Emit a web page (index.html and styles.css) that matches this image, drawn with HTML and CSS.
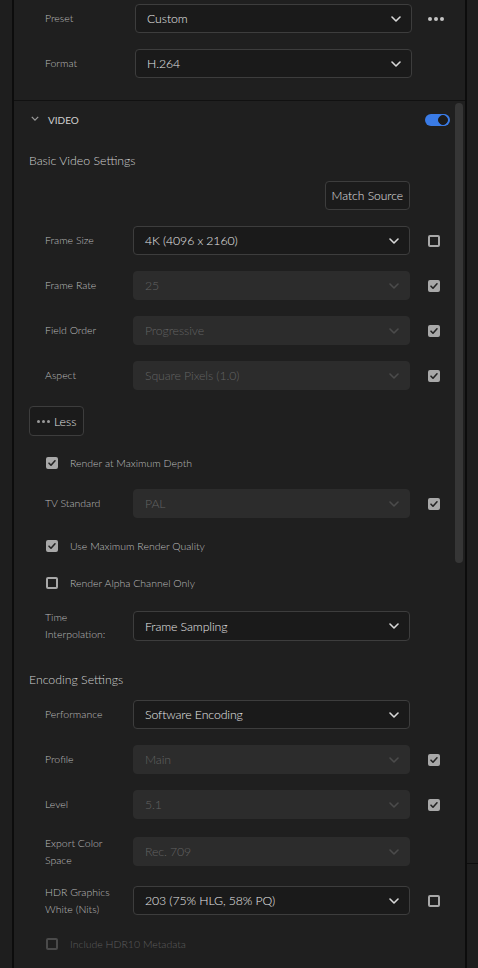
FILE: index.html
```html
<!DOCTYPE html>
<html lang="en">
<head>
    <meta charset="UTF-8">
    <meta name="viewport" content="width=device-width, initial-scale=1.0">
    <title>Export Settings</title>
    <link rel="stylesheet" href="styles.css">
</head>
<body>
    <div class="gutter"></div>
    <div class="panel">
        <div class="top">
            <div class="row first">
                <span class="label">Preset</span>
                <div class="select"><span>Custom</span><svg class="chev" viewBox="0 0 10 6"><path d="M1 1l4 4 4-4"/></svg></div>
                <div class="more"><i></i><i></i><i></i></div>
            </div>
            <div class="row">
                <span class="label">Format</span>
                <div class="select"><span>H.264</span><svg class="chev" viewBox="0 0 10 6"><path d="M1 1l4 4 4-4"/></svg></div>
            </div>
        </div>

        <div class="video">
            <div class="video-body">
                <div class="section-head">
                    <svg class="head-chev" viewBox="0 0 10 6"><path d="M1 1l4 4 4-4"/></svg>
                    <span>VIDEO</span>
                    <div class="toggle"><i></i></div>
                </div>

                <h3 class="group-title">Basic Video Settings</h3>

                <div class="row match">
                    <span class="label"></span>
                    <div class="field-right"><button class="btn">Match Source</button></div>
                </div>

                <div class="row">
                    <span class="label">Frame Size</span>
                    <div class="select"><span>4K (4096 x 2160)</span><svg class="chev" viewBox="0 0 10 6"><path d="M1 1l4 4 4-4"/></svg></div>
                    <span class="box"></span>
                </div>
                <div class="row">
                    <span class="label">Frame Rate</span>
                    <div class="select off"><span>25</span><svg class="chev" viewBox="0 0 10 6"><path d="M1 1l4 4 4-4"/></svg></div>
                    <span class="box on"><svg viewBox="0 0 12 12"><path d="M3 6.2l2 2 4-4.4"/></svg></span>
                </div>
                <div class="row">
                    <span class="label">Field Order</span>
                    <div class="select off"><span>Progressive</span><svg class="chev" viewBox="0 0 10 6"><path d="M1 1l4 4 4-4"/></svg></div>
                    <span class="box on"><svg viewBox="0 0 12 12"><path d="M3 6.2l2 2 4-4.4"/></svg></span>
                </div>
                <div class="row">
                    <span class="label">Aspect</span>
                    <div class="select off"><span>Square Pixels (1.0)</span><svg class="chev" viewBox="0 0 10 6"><path d="M1 1l4 4 4-4"/></svg></div>
                    <span class="box on"><svg viewBox="0 0 12 12"><path d="M3 6.2l2 2 4-4.4"/></svg></span>
                </div>

                <button class="btn less"><span class="dots"><i></i><i></i><i></i></span>Less</button>

                <div class="check-row mt21">
                    <span class="box on"><svg viewBox="0 0 12 12"><path d="M3 6.2l2 2 4-4.4"/></svg></span>
                    <span>Render at Maximum Depth</span>
                </div>
                <div class="row mt20">
                    <span class="label">TV Standard</span>
                    <div class="select off"><span>PAL</span><svg class="chev" viewBox="0 0 10 6"><path d="M1 1l4 4 4-4"/></svg></div>
                    <span class="box on"><svg viewBox="0 0 12 12"><path d="M3 6.2l2 2 4-4.4"/></svg></span>
                </div>
                <div class="check-row mt22">
                    <span class="box on"><svg viewBox="0 0 12 12"><path d="M3 6.2l2 2 4-4.4"/></svg></span>
                    <span>Use Maximum Render Quality</span>
                </div>
                <div class="check-row mt25">
                    <span class="box"></span>
                    <span>Render Alpha Channel Only</span>
                </div>
                <div class="row tall mt22">
                    <span class="label">Time<br>Interpolation:</span>
                    <div class="select"><span>Frame Sampling</span><svg class="chev" viewBox="0 0 10 6"><path d="M1 1l4 4 4-4"/></svg></div>
                </div>

                <h3 class="group-title enc">Encoding Settings</h3>

                <div class="row mt10">
                    <span class="label">Performance</span>
                    <div class="select"><span>Software Encoding</span><svg class="chev" viewBox="0 0 10 6"><path d="M1 1l4 4 4-4"/></svg></div>
                </div>
                <div class="row">
                    <span class="label">Profile</span>
                    <div class="select off"><span>Main</span><svg class="chev" viewBox="0 0 10 6"><path d="M1 1l4 4 4-4"/></svg></div>
                    <span class="box on"><svg viewBox="0 0 12 12"><path d="M3 6.2l2 2 4-4.4"/></svg></span>
                </div>
                <div class="row">
                    <span class="label">Level</span>
                    <div class="select off"><span>5.1</span><svg class="chev" viewBox="0 0 10 6"><path d="M1 1l4 4 4-4"/></svg></div>
                    <span class="box on"><svg viewBox="0 0 12 12"><path d="M3 6.2l2 2 4-4.4"/></svg></span>
                </div>
                <div class="row mt18">
                    <span class="label">Export Color<br>Space</span>
                    <div class="select off"><span>Rec. 709</span><svg class="chev" viewBox="0 0 10 6"><path d="M1 1l4 4 4-4"/></svg></div>
                </div>
                <div class="row mt20">
                    <span class="label">HDR Graphics<br>White (Nits)</span>
                    <div class="select"><span>203 (75% HLG, 58% PQ)</span><svg class="chev" viewBox="0 0 10 6"><path d="M1 1l4 4 4-4"/></svg></div>
                    <span class="box"></span>
                </div>
                <div class="check-row mt23 disabled">
                    <span class="box"></span>
                    <span>Include HDR10 Metadata</span>
                </div>
            </div>
            <div class="scroll-track"><div class="thumb"></div></div>
        </div>
    </div>
    <div class="gutter right"><div class="rule"></div></div>
</body>
</html>
```

FILE: styles.css
```css
body {
    margin: 0;
    padding: 0;
    height: 968px;
    overflow: hidden;
    display: flex;
    background-color: #1e1e1e;
    font-family: "Lato", "Open Sans", sans-serif;
    font-weight: 300;
    color: #b9b9b9;
}
.gutter {
    width: 12px;
    flex-shrink: 0;
}
.gutter.right {
    width: 11px;
}
.gutter .rule {
    height: 863px;
    border-bottom: 1px solid #0e0e0e;
}
.panel {
    flex: 1;
    border-left: 2px solid #0c0c0c;
    border-right: 2px solid #0c0c0c;
    background-color: #1f1f1f;
    display: flex;
    flex-direction: column;
}

/* rows */
.row {
    display: flex;
    align-items: center;
    height: 29px;
    margin-top: 16px;
    padding-left: 16px;
}
.label {
    width: 88px;
    flex-shrink: 0;
    font-size: 10.5px;
    line-height: 17px;
    color: #bdbdbd;
}
.select {
    width: 277px;
    height: 29px;
    box-sizing: border-box;
    display: flex;
    align-items: center;
    justify-content: space-between;
    padding: 0 10px 0 11px;
    background-color: #1a1a1a;
    border: 1px solid #3d3d3d;
    border-radius: 4px;
    font-size: 12.3px;
    letter-spacing: -0.1px;
    color: #e8e8e8;
}
.select.off {
    background-color: #2c2c2c;
    border-color: #2c2c2c;
    color: #636363;
}
.chev {
    width: 10px;
    height: 6px;
    fill: none;
    stroke: #d8d8d8;
    stroke-width: 1.6;
    stroke-linecap: round;
    stroke-linejoin: round;
}
.select.off .chev {
    stroke: #4b4b4b;
}
.row .box {
    margin-left: 18px;
}

/* top block */
.top {
    height: 100px;
    border-bottom: 1px solid #111;
}
.top .row {
    padding-left: 31px;
}
.top .row.first {
    margin-top: 4px;
}
.top .label {
    width: 90px;
}
.more {
    display: flex;
    gap: 2px;
    margin-left: 16px;
}
.more i {
    width: 4px;
    height: 4px;
    border-radius: 50%;
    background-color: #c4c4c4;
}

/* video section */
.video {
    flex: 1;
    display: flex;
}
.video-body {
    flex: 1;
    padding-left: 15px;
}
.section-head {
    height: 37px;
    display: flex;
    align-items: center;
    font-size: 10px;
    font-weight: 400;
    color: #cfcfcf;
}
.head-chev {
    width: 8px;
    height: 5px;
    margin: 0 9px 2px 2px;
    fill: none;
    stroke: #9a9a9a;
    stroke-width: 1.6;
}
.toggle {
    margin-left: auto;
    margin-right: 5px;
    width: 25px;
    height: 12px;
    border-radius: 6px;
    background-color: #3a7be6;
    display: flex;
    align-items: center;
    justify-content: flex-end;
    padding-right: 1px;
    box-sizing: border-box;
}
.toggle i {
    width: 8px;
    height: 8px;
    border-radius: 50%;
    background-color: #1b1b1b;
    border: 1px solid #1b1b1b;
    box-shadow: 0 0 0 1px #3a7be6;
    margin-right: 1px;
}
.group-title {
    margin: 13px 0 0 0;
    font-size: 12.3px;
    line-height: 20px;
    font-weight: 300;
    color: #d0d0d0;
}
.group-title.enc {
    margin-top: 29px;
}
.row.match {
    margin-top: 10px;
    padding-left: 16px;
}
.field-right {
    width: 277px;
    display: flex;
    justify-content: flex-end;
}
.btn {
    height: 29px;
    padding: 0 6px;
    background-color: #1b1b1b;
    border: 1px solid #3d3d3d;
    border-radius: 4px;
    font-family: inherit;
    font-weight: 300;
    font-size: 12px;
    color: #e0e0e0;
}
.btn.less {
    display: flex;
    align-items: center;
    height: 30px;
    width: 55px;
    margin-top: 16px;
    padding: 0 0 0 7px;
    font-size: 12.3px;
}
.dots {
    display: flex;
    gap: 2px;
    margin-right: 4px;
}
.dots i {
    width: 3px;
    height: 3px;
    border-radius: 50%;
    background-color: #9a9a9a;
}

/* checkbox rows */
.check-row {
    display: flex;
    align-items: center;
    height: 12px;
    padding-left: 17px;
    font-size: 10.5px;
    color: #bebebe;
}
.check-row .box {
    margin-right: 12px;
}
.check-row.disabled {
    color: #5e5e5e;
}
.check-row.disabled .box {
    border-color: #4a4a4a;
}
.box {
    width: 12px;
    height: 12px;
    box-sizing: border-box;
    border: 2px solid #a8a8a8;
    border-radius: 2px;
    flex-shrink: 0;
    display: flex;
}
.box.on {
    background-color: #a8a8a8;
}
.box svg {
    fill: none;
    stroke: #242424;
    stroke-width: 1.6;
    stroke-linecap: round;
    stroke-linejoin: round;
    margin: -2px;
    width: 12px;
    height: 12px;
}

.row.tall {
    height: 30px;
}
.row.tall .select {
    height: 30px;
}
.mt10 { margin-top: 10px; }
.mt18 { margin-top: 18px; }
.mt20 { margin-top: 20px; }
.mt21 { margin-top: 21px; }
.mt22 { margin-top: 22px; }
.mt23 { margin-top: 23px; }
.mt25 { margin-top: 25px; }

/* scrollbar */
.scroll-track {
    width: 8px;
    margin: 2px 2px 0 0;
}
.scroll-track .thumb {
    height: 460px;
    border-radius: 4px;
    background-color: #363636;
}
```
